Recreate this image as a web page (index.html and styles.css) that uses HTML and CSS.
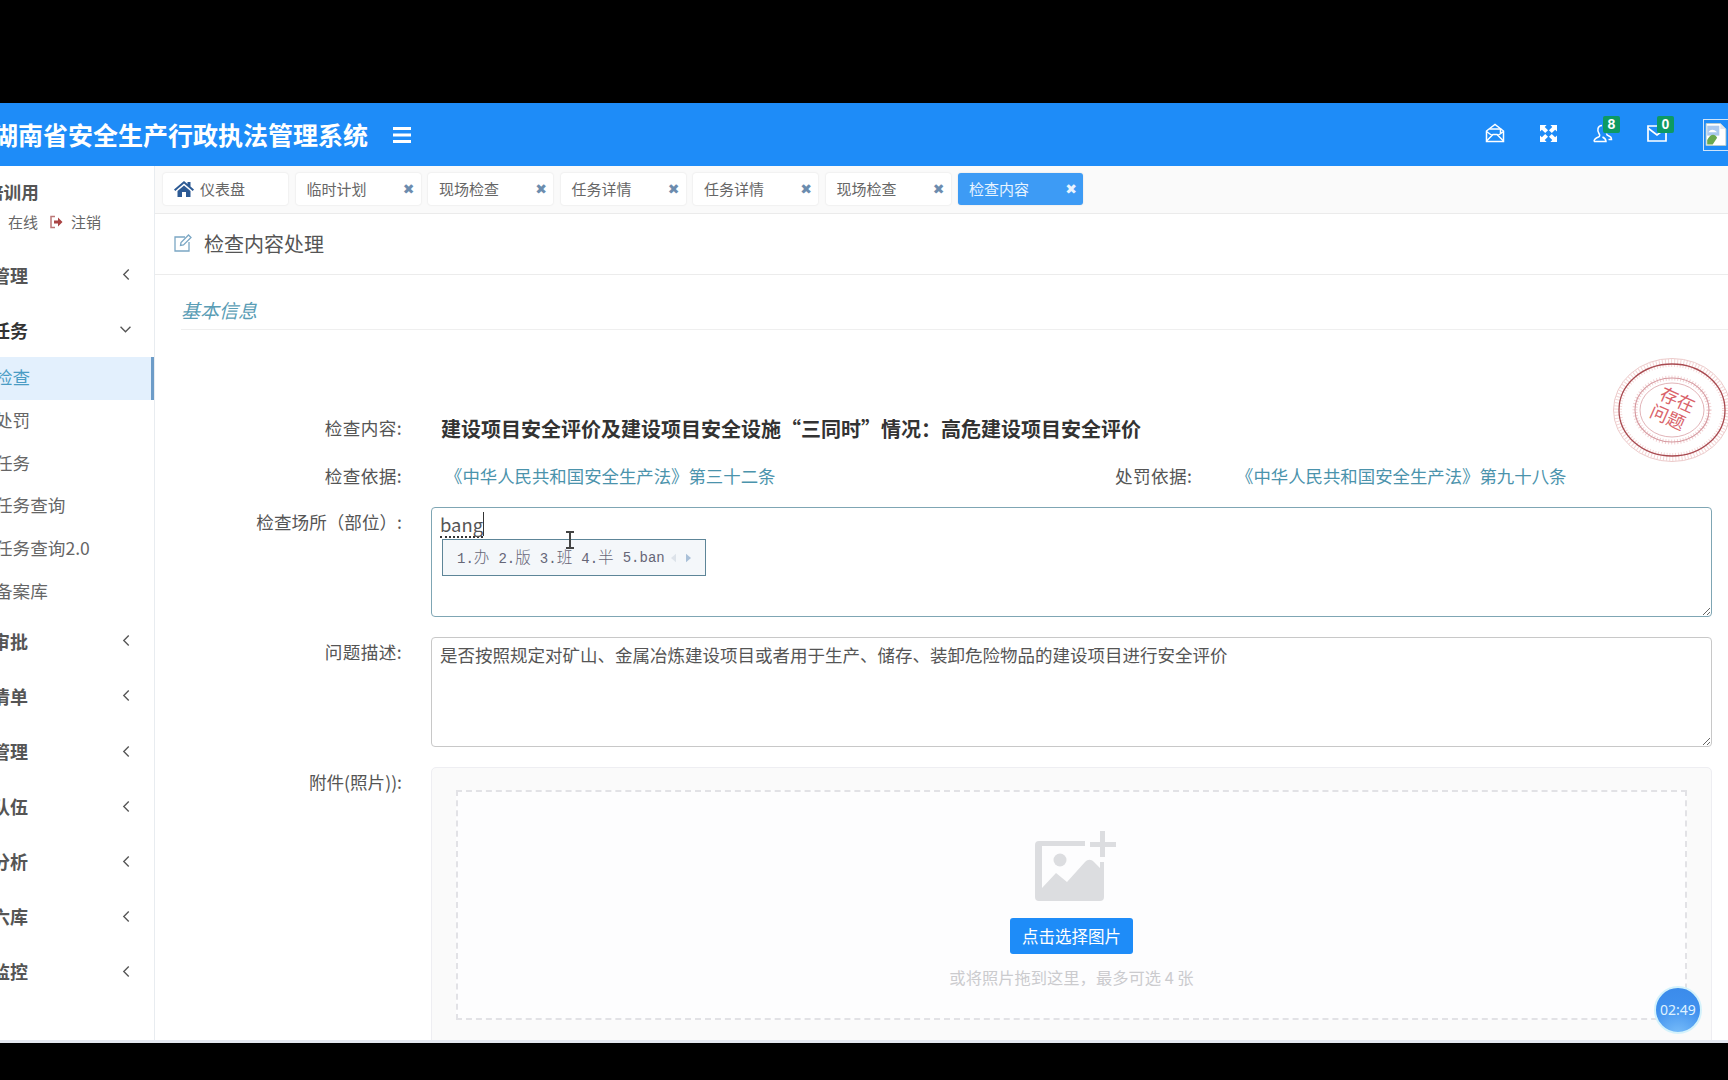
FILE: index.html
```html
<!DOCTYPE html>
<html lang="zh-CN">
<head>
<meta charset="utf-8">
<title>湖南省安全生产行政执法管理系统</title>
<link rel="stylesheet" href="styles.css">
</head>
<body>
<div class="app">
  <header class="topbar">
    <div class="brand">湖南省安全生产行政执法管理系统</div>
    <svg class="burger" viewBox="0 0 18 16"><path d="M0 1.500h18M0 8h18M0 14.500h18" stroke="#fff" stroke-width="3" fill="none"/></svg>
    <div class="top-icons">
      <span class="top-icon"><svg viewBox="0 0 20 20" fill="none" stroke="#fff" stroke-width="1.500"><path d="M1.500 8 10 1.500 18.500 8v10.500h-17z"/><path d="M1.500 18 8 11.500h4l6.500 6.500M1.500 8.500 7 12.500M18.500 8.500 13 12.500M4.500 6h11v5"/></svg></span>
      <span class="top-icon"><svg class="expand" viewBox="0 0 18 18" fill="#fff"><path d="M0 0h7L5 2l3.500 3.500-3 3L2 5 0 7zM18 0v7l-2-2-3.500 3.500-3-3L13 2l-2-2zM0 18v-7l2 2 3.500-3.500 3 3L5 16l2 2zM18 18h-7l2-2-3.500-3.500 3-3L16 13l2-2z"/></svg></span>
      <span class="top-icon"><svg viewBox="0 0 20 20" fill="none" stroke="#fff" stroke-width="1.500"><path d="M1 18.500c0-2.500 2-3.500 4.500-4.500 1.500-.5 1.500-2 .5-3.500-1-1.500-1.500-3-1-5 .5-2 2-3 4-3"/><path d="M1 18.500h12c0-2-1.500-3.500-3.500-4.500"/><path d="M13.500 10.500c0 1.500 1 2 2.500 2.500 1.500.5 2.500 1.500 2.500 3.500h-3"/></svg><b class="badge">8</b></span>
      <span class="top-icon"><svg viewBox="0 0 20 18" fill="none" stroke="#fff" stroke-width="1.700"><path d="M11 2H1v15h18V9"/><path d="M1.500 4.500 10 11l8.500-6.500"/></svg><b class="badge">0</b></span>
      <span class="avatar"><svg viewBox="0 0 20 22"><path d="M1 1h13l5 5v15H1z" fill="#fff" stroke="#bcc" stroke-width=".8"/><path d="M2 3h11v9H2z" fill="#a9c8ee"/><path d="M3 9c2-3 5-3 8 0z" fill="#fff"/><path d="M2 16c3-6 7-6 9-2l-4 6H2z" fill="#6aa84f"/><path d="M14 1v5h5" fill="#dfe6ee"/></svg></span>
    </div>
  </header>
  <div class="body">
    <aside class="sidebar">
      <div class="user">
        <div class="user-name">培训用</div>
        <div class="user-status">
          <span>在线</span>
          <svg class="logout" viewBox="0 0 14 14"><path d="M6 1.500H2v11h4" fill="none" stroke="#b77" stroke-width="1.500"/><path d="M5 5.500h4V2.500L13.500 7 9 11.500v-3H5z" fill="#a44"/></svg>
          <span>注销</span>
        </div>
      </div>
      <nav>
        <div class="nav-item"><span>管理</span><svg class="chev" viewBox="0 0 10 14"><path d="M7.500 1.500 2 7l5.500 5.500"/></svg></div>
        <div class="nav-item nav-open"><span>任务</span><svg class="chev-down" viewBox="0 0 14 10"><path d="M1.500 2 7 7.500 12.500 2"/></svg></div>
        <div class="sub sub-active">检查</div>
        <div class="sub">处罚</div>
        <div class="sub">任务</div>
        <div class="sub">任务查询</div>
        <div class="sub">任务查询2.0</div>
        <div class="sub">备案库</div>
        <div class="nav-item"><span>审批</span><svg class="chev" viewBox="0 0 10 14"><path d="M7.500 1.500 2 7l5.500 5.500"/></svg></div>
        <div class="nav-item"><span>清单</span><svg class="chev" viewBox="0 0 10 14"><path d="M7.500 1.500 2 7l5.500 5.500"/></svg></div>
        <div class="nav-item"><span>管理</span><svg class="chev" viewBox="0 0 10 14"><path d="M7.500 1.500 2 7l5.500 5.500"/></svg></div>
        <div class="nav-item"><span>队伍</span><svg class="chev" viewBox="0 0 10 14"><path d="M7.500 1.500 2 7l5.500 5.500"/></svg></div>
        <div class="nav-item"><span>分析</span><svg class="chev" viewBox="0 0 10 14"><path d="M7.500 1.500 2 7l5.500 5.500"/></svg></div>
        <div class="nav-item"><span>六库</span><svg class="chev" viewBox="0 0 10 14"><path d="M7.500 1.500 2 7l5.500 5.500"/></svg></div>
        <div class="nav-item"><span>监控</span><svg class="chev" viewBox="0 0 10 14"><path d="M7.500 1.500 2 7l5.500 5.500"/></svg></div>
      </nav>
    </aside>
    <main class="main">
      <div class="tabs">
        <div class="tab tab-home"><svg class="home" viewBox="0 0 20 17"><path d="M10 1 0 9.500l1.300 1.500L10 3.500l8.700 7.500L20 9.500 16.500 6.500V2h-3v2z" fill="#2c5a94"/><path d="M3.500 11 10 5.500l6.500 5.500v6H12v-5H8v5H3.500z" fill="#2c5a94"/></svg><span>仪表盘</span></div>
        <div class="tab"><span>临时计划</span><b class="x">✖</b></div>
        <div class="tab"><span>现场检查</span><b class="x">✖</b></div>
        <div class="tab"><span>任务详情</span><b class="x">✖</b></div>
        <div class="tab"><span>任务详情</span><b class="x">✖</b></div>
        <div class="tab"><span>现场检查</span><b class="x">✖</b></div>
        <div class="tab tab-active"><span>检查内容</span><b class="x">✖</b></div>
      </div>
      <div class="page-title">
        <svg class="edit" viewBox="0 0 18 18" fill="none" stroke="#7ba7c4" stroke-width="1.300"><path d="M11 3H1v14h14V8"/><path d="M6.500 11.500 7 8.500 14.500 1l2.500 2.500L9.500 11z"/></svg>
        <span>检查内容处理</span>
      </div>
      <div class="content">
        <div class="section-title">基本信息</div>
        <svg class="stamp" viewBox="0 0 124 110">
          <ellipse cx="62" cy="55" rx="54" ry="47" fill="#fff" stroke="#f4d6d6" stroke-width="8" stroke-dasharray="1 2"/>
          <ellipse cx="62" cy="55" rx="58.500" ry="51.500" fill="none" stroke="#eccaca" stroke-width="1"/>
          <ellipse cx="62" cy="55" rx="53" ry="46" fill="none" stroke="#a84a50" stroke-width="1.300"/>
          <ellipse cx="62" cy="55" rx="37" ry="32" fill="#fff" stroke="#f2d2d4" stroke-width="5" stroke-dasharray="1 2"/>
          <ellipse cx="62" cy="55" rx="37" ry="32" fill="none" stroke="#d59aa0" stroke-width="1.100"/>
          <ellipse cx="62" cy="55" rx="32" ry="27" fill="#fff" stroke="#e2b4b8" stroke-width="1"/>
          <g class="stamp-text" transform="rotate(24 62 55)">
            <text x="63" y="50" text-anchor="middle">存在</text>
            <text x="61" y="70" text-anchor="middle">问题</text>
          </g>
        </svg>
        <div class="row row-first">
          <label class="label label-tight">检查内容:</label>
          <div class="value-strong">建设项目安全评价及建设项目安全设施&#x201C;三同时&#x201D;情况&#xFF1A;高危建设项目安全评价</div>
        </div>
        <div class="row row-basis">
          <label class="label">检查依据:</label>
          <a class="link basis-left">《中华人民共和国安全生产法》第三十二条</a>
          <label class="label-penalty">处罚依据:</label>
          <a class="link">《中华人民共和国安全生产法》第九十八条</a>
        </div>
        <div class="row row-field">
          <label class="label label-field label-long">检查场所&#xFF08;部位&#xFF09;:</label>
          <div class="field field-focus">
            <span class="composing">bang</span><span class="caret"></span>
            <div class="ime">
              <span class="ime-item">1.<i>办</i></span>
              <span class="ime-item">2.<i>版</i></span>
              <span class="ime-item">3.<i>班</i></span>
              <span class="ime-item">4.<i>半</i></span>
              <span class="ime-item">5.ban</span>
              <svg class="ime-arrows" viewBox="0 0 24 10"><path d="M6 0v10L0 5z" fill="#dde3ea"/><path d="M18 0v10l6-5z" fill="#a9c0d8"/></svg>
            </div>
            <svg class="ibeam" viewBox="0 0 10 18"><path d="M1 1h8M1 17h8M5 1v16" stroke="#444" stroke-width="2" fill="none"/></svg>
          </div>
        </div>
        <div class="row row-field">
          <label class="label label-field">问题描述:</label>
          <div class="field">是否按照规定对矿山、金属冶炼建设项目或者用于生产、储存、装卸危险物品的建设项目进行安全评价</div>
        </div>
        <div class="row row-field">
          <label class="label label-field label-long">附件(照片)):</label>
          <div class="upload">
            <div class="dropzone">
              <svg class="upload-icon" viewBox="0 0 81 70"><path fill="#dcdde0" d="M4 10h46v5H7v42l14-15 11 9 18-20c3-3 6-3 9 0l6 6V31h4v35a4 4 0 0 1-4 4H4a4 4 0 0 1-4-4V14a4 4 0 0 1 4-4z"/><circle cx="25" cy="29" r="6.500" fill="#dcdde0"/><path fill="#dcdde0" d="M65 0h5v11h11v5H70v10h-5V16H55v-5h10z"/></svg>
              <button class="pick">点击选择图片</button>
              <p class="hint">或将照片拖到这里&#xFF0C;最多可选 4 张</p>
            </div>
          </div>
        </div>
      </div>
    </main>
  </div>
  <div class="strip"></div>
  <div class="timer">02:49</div>
</div>
</body>
</html>
```
FILE: styles.css
```css
* { box-sizing: border-box; }
html, body { margin: 0; height: 100%; background: #000; overflow: hidden; }
body {
  font-family: "Noto Sans CJK SC", "Noto Sans", sans-serif;
  color: #555;
  padding-top: 103px;
}
.app {
  position: relative;
  height: 940px;
  display: flex;
  flex-direction: column;
  background: #fff;
  overflow: hidden;
}
.topbar {
  height: 63px;
  flex: none;
  background: #1e8cf8;
  display: flex;
  align-items: center;
  color: #fff;
}
.brand {
  margin: 0 0 2px -7px;
  font-size: 25px;
  font-weight: 700;
  white-space: nowrap;
}
.burger { width: 18px; height: 16px; margin-left: 25px; }
.top-icons { margin-left: auto; display: flex; align-items: center; height: 100%; }
.top-icon { position: relative; width: 20px; height: 20px; margin: -3px 34px 0 0; display: block; }
.top-icon svg { width: 20px; height: 20px; display: block; }
.top-icon .expand { width: 17px; height: 17px; margin: 2px 0 0 1px; }
.badge {
  position: absolute;
  top: -7px;
  left: 10px;
  width: 17px;
  height: 17px;
  background: #0d9a63;
  color: #fff;
  font: 700 14px/17px "Liberation Sans", sans-serif;
  text-align: center;
  border-radius: 2px;
}
.avatar {
  width: 32px;
  height: 32px;
  margin-left: 2px;
  margin-right: -7px;
  border: 1px solid #cfe4fa;
  display: block;
}
.avatar svg { width: 22px; height: 25px; display: block; margin: 2px 0 0 1px; }

.body { flex: 1; display: flex; min-height: 0; }
.sidebar { width: 155px; flex: none; border-right: 1px solid #e8ecf0; overflow: hidden; background: #fff; }
.user { height: 81px; padding-top: 12px; }
.user-name { margin-left: -14px; font-size: 17.600px; font-weight: 700; line-height: 28px; color: #555; }
.user-status { display: flex; align-items: center; margin: 3px 0 0 8px; font-size: 15px; line-height: 26px; color: #666; }
.logout { width: 14px; height: 14px; margin: 0 8px 0 11px; }
.nav-item {
  height: 55.100px;
  display: flex;
  align-items: center;
  justify-content: space-between;
  margin-left: -8px;
  padding-right: 23px;
  font-size: 18px;
  font-weight: 700;
  color: #555;
}
.nav-open { color: #333; }
.chev { width: 9px; height: 13px; }
.chev-down { width: 13px; height: 9px; margin-right: -1px; }
.chev path, .chev-down path { fill: none; stroke: #555; stroke-width: 1.500; }
.sub {
  height: 42.700px;
  line-height: 39px;
  margin-left: -5px;
  font-size: 17.600px;
  color: #666;
  white-space: nowrap;
}
.sub-active {
  color: #4a9cc4;
  background: #e3f0fd;
  border-right: 3px solid #6d9cc8;
}

.main { flex: 1; min-width: 0; display: flex; flex-direction: column; }
.tabs {
  height: 48px;
  flex: none;
  display: flex;
  gap: 7.500px;
  padding: 7px 0 0 8px;
  background: #fafafa;
  border-bottom: 1px solid #ebebeb;
}
.tab {
  width: 125px;
  height: 32px;
  display: flex;
  align-items: center;
  justify-content: space-between;
  padding: 0 6px 1px 11px;
  background: #fff;
  border-radius: 3px;
  box-shadow: 0 0 2px rgba(0,0,0,.13);
  font-size: 15px;
  color: #666;
}
.tab-home { justify-content: flex-start; }
.home { width: 20px; height: 17px; margin-right: 6px; }
.x { font: 700 14px/1 "DejaVu Sans", sans-serif; color: #6c8cae; }
.tab-active { background: #3d9bf5; color: #e8f4ff; }
.tab-active .x { color: #e8f4ff; }
.page-title {
  height: 61px;
  flex: none;
  display: flex;
  align-items: center;
  padding: 0 0 2px 19px;
  border-bottom: 1px solid #ececec;
  font-size: 20px;
  color: #555;
}
.edit { width: 18px; height: 18px; margin-right: 12px; }
.content { position: relative; flex: 1; min-height: 0; overflow: hidden; }
.section-title {
  margin: 0 0 0 26px;
  height: 55px;
  padding-top: 20px;
  line-height: 30px;
  border-bottom: 1px solid #efefef;
  font-size: 19px;
  font-style: italic;
  color: #5a9db5;
}
.stamp { position: absolute; top: 80px; right: -6px; width: 124px; height: 110px; }
.stamp-text text { font-size: 18px; fill: #d9636b; }
.row { display: flex; align-items: flex-start; }
.label {
  width: 247px;
  flex: none;
  margin-right: 29px;
  text-align: right;
  font-size: 17.600px;
  line-height: 28px;
  letter-spacing: .4px;
  color: #555;
}
.label-long { letter-spacing: 0; }
.label-field { padding-top: 1px; }
.label-tight { margin-top: -1px; }
.row-first { margin-top: 85px; }
.value-strong { padding-left: 10px; font-size: 20px; font-weight: 700; line-height: 28px; color: #333; white-space: nowrap; }
.row-basis { margin-top: 19px; font-size: 17.400px; line-height: 28px; }
.link { color: #4b93ac; white-space: nowrap; }
.basis-left { width: 684px; padding-left: 14px; flex: none; }
.label-penalty { width: 121px; flex: none; color: #555; font-size: 17.600px; letter-spacing: .4px; }
.row-field { margin-top: 20px; }
.row-basis + .row-field { margin-top: 17px; }
.field {
  position: relative;
  width: 1281px;
  height: 110px;
  flex: none;
  padding: 2px 8px;
  border: 1px solid #c8c8c8;
  border-radius: 4px;
  background: #fff;
  font-size: 17.500px;
  line-height: 30px;
  color: #555;
  resize: vertical;
  overflow: auto;
}
.field-focus { border-color: #7fa6b4; font-size: 18.400px; padding-top: 1px; }
.composing { border-bottom: 2px dotted #333; line-height: 23px; display: inline-block; }
.caret { display: inline-block; width: 1px; height: 24px; background: #333; vertical-align: -4px; }
.ime {
  position: absolute;
  top: 31px;
  left: 10px;
  width: 264px;
  height: 37px;
  display: flex;
  align-items: center;
  gap: 9px;
  padding-left: 14px;
  background: #f4f7fa;
  border: 1px solid #5d8598;
  font: 14px/1 "Liberation Mono", monospace;
  color: #667;
}
.ime-item i { font: 300 15.600px/1 "Noto Sans CJK SC", sans-serif; }
.ime-arrows { width: 20px; height: 10px; margin-left: -3px; }
.ibeam { position: absolute; top: 23px; left: 133px; width: 10px; height: 18px; }
.upload {
  width: 1281px;
  height: 300px;
  flex: none;
  padding: 22px 24px 0;
  background: #fafafa;
  border: 1px solid #eeeef2;
  border-radius: 5px;
}
.dropzone {
  height: 230px;
  border: 2px dashed #e2e2e6;
  background: #fdfdfe;
  display: flex;
  flex-direction: column;
  align-items: center;
  padding-top: 39px;
}
.upload-icon { width: 81px; height: 70px; flex: none; margin-left: 7px; }
.pick {
  width: 123px;
  height: 36px;
  margin-top: 17px;
  border: 0;
  border-radius: 3px;
  background: #1e8cf8;
  color: #fff;
  font: 16.500px "Noto Sans CJK SC", sans-serif;
  padding: 0;
}
.hint { margin: 11px 0 0; font-size: 16.300px; line-height: 24px; color: #cbcbce; }
.strip { height: 3px; flex: none; background: #e4e8f1; }
.timer {
  position: absolute;
  top: 883px;
  left: 1654px;
  width: 48px;
  height: 48px;
  border-radius: 50%;
  border: 2px solid #d4f2fb;
  background: radial-gradient(circle at 50% 110%, #7cc0fa, #3f90ee 60%, #3a8aea);
  color: #dff2ff;
  font: 14px/44px "Noto Sans", sans-serif;
  text-align: center;
}
```
